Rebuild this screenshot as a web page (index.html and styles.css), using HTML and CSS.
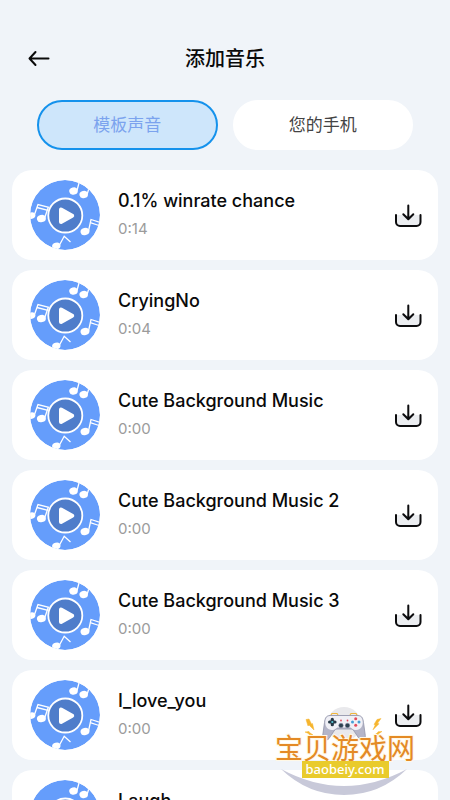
FILE: index.html
```html
<!DOCTYPE html>
<html lang="zh-CN">
<head>
<meta charset="utf-8">
<meta name="viewport" content="width=device-width, initial-scale=1">
<title>添加音乐</title>
<link rel="stylesheet" href="styles.css">
</head>
<body>
<svg class="sprite" aria-hidden="true">
  <defs>
    <clipPath id="disc-clip"><circle cx="35" cy="35" r="35"/></clipPath>
    <symbol id="disc" viewBox="0 0 70 70">
      <g clip-path="url(#disc-clip)">
        <circle cx="35" cy="35" r="35" fill="#659dfb"/>
        <g fill="#fff">
          <ellipse cx="43.5" cy="11" rx="4.3" ry="3.600" transform="rotate(-15 43.5 11)"/>
          <ellipse cx="53.7" cy="14.5" rx="4.3" ry="3.600" transform="rotate(-15 53.7 14.5)"/>
          <ellipse cx="1.2" cy="35.6" rx="4.2" ry="3.300" transform="rotate(-15 1.2 35.6)"/>
          <ellipse cx="11.4" cy="38.6" rx="4.5" ry="3.600" transform="rotate(-15 11.4 38.6)"/>
          <ellipse cx="55" cy="51.5" rx="4.5" ry="3.600" transform="rotate(-15 55 51.5)"/>
          <ellipse cx="26.3" cy="66" rx="4.2" ry="3.300" transform="rotate(-15 26.3 66)"/>
        </g>
        <g fill="none" stroke="#fff" stroke-width="1.300">
          <path d="M47 10.500 49.5 1M57.200 14 60 5"/>
          <path d="M4.5 34.500 8 24.600 19 27.400M7 27.500 18 30.400M14.800 37.500 18.200 27.500"/>
          <path d="M58.500 51 61 39.500 70 42.500M60.300 42.700 69 45.500"/>
          <path d="M29.500 65 34.200 56.300 40.500 62"/>
        </g>
      </g>
      <circle cx="35.300" cy="35.500" r="17" fill="#4f7dca" stroke="#fff" stroke-width="1.800"/>
      <path d="M31 29.500v12.500l11.200-6.200z" fill="#fff" stroke="#fff" stroke-width="4" stroke-linejoin="round"/>
    </symbol>
    <symbol id="download" viewBox="0 0 28 24">
      <path d="M2 11v7a4 4 0 0 0 4 4h16a4 4 0 0 0 4-4v-7z" fill="#eceef1"/>
      <g fill="none" stroke="#0c0c0e" stroke-width="2" stroke-linecap="round" stroke-linejoin="round">
        <path d="M2 11v7a4 4 0 0 0 4 4h16.500a4 4 0 0 0 4-4v-7"/>
        <path d="M14.300 1.500v13.500M9.300 10.300l5 5 5-5"/>
      </g>
    </symbol>
  </defs>
</svg>

<div class="app">
  <header class="topbar">
    <button class="back" type="button" aria-label="返回">
      <svg viewBox="0 0 22 18" width="22" height="18" fill="none" stroke="#0a0a0a" stroke-width="2" stroke-linecap="round" stroke-linejoin="round"><path d="M20.500 9.500H1.500M7.500 3 1.500 9.500l6 6.500"/></svg>
    </button>
    <h1 class="title">添加音乐</h1>
  </header>

  <nav class="tabs">
    <button class="tab tab-active" type="button">模板声音</button>
    <button class="tab" type="button">您的手机</button>
  </nav>

  <ul class="tracks">
    <li class="track">
      <button class="play" type="button" aria-label="播放"><svg><use href="#disc"/></svg></button>
      <div class="info"><h2 class="name">0.1% winrate chance</h2><p class="time">0:14</p></div>
      <button class="save" type="button" aria-label="下载"><svg><use href="#download"/></svg></button>
    </li>
    <li class="track">
      <button class="play" type="button" aria-label="播放"><svg><use href="#disc"/></svg></button>
      <div class="info"><h2 class="name">CryingNo</h2><p class="time">0:04</p></div>
      <button class="save" type="button" aria-label="下载"><svg><use href="#download"/></svg></button>
    </li>
    <li class="track">
      <button class="play" type="button" aria-label="播放"><svg><use href="#disc"/></svg></button>
      <div class="info"><h2 class="name">Cute Background Music</h2><p class="time">0:00</p></div>
      <button class="save" type="button" aria-label="下载"><svg><use href="#download"/></svg></button>
    </li>
    <li class="track">
      <button class="play" type="button" aria-label="播放"><svg><use href="#disc"/></svg></button>
      <div class="info"><h2 class="name">Cute Background Music 2</h2><p class="time">0:00</p></div>
      <button class="save" type="button" aria-label="下载"><svg><use href="#download"/></svg></button>
    </li>
    <li class="track">
      <button class="play" type="button" aria-label="播放"><svg><use href="#disc"/></svg></button>
      <div class="info"><h2 class="name">Cute Background Music 3</h2><p class="time">0:00</p></div>
      <button class="save" type="button" aria-label="下载"><svg><use href="#download"/></svg></button>
    </li>
    <li class="track">
      <button class="play" type="button" aria-label="播放"><svg><use href="#disc"/></svg></button>
      <div class="info"><h2 class="name">I_love_you</h2><p class="time">0:00</p></div>
      <button class="save" type="button" aria-label="下载"><svg><use href="#download"/></svg></button>
    </li>
    <li class="track">
      <button class="play" type="button" aria-label="播放"><svg><use href="#disc"/></svg></button>
      <div class="info"><h2 class="name">Laugh</h2></div>
    </li>
  </ul>

  <div class="brand">
    <svg class="brand-art" viewBox="0 0 140 92" aria-hidden="true">
      <circle cx="69" cy="19" r="17" fill="#e9e9ec"/>
      <path d="M6 64Q69 98 132 64Q105 90 69 90T6 64Z" fill="#c8c9d9"/>
      <path d="M56 10l1-1.500h5l1 1.500M75 10l1-1.500h5l1 1.500" fill="none" stroke="#f0b63c" stroke-width="1.200"/>
      <path d="M55 10.500h28c4 0 5 3 5.500 7l1.800 13c.5 4-4 6-6.300 3L79 26c-1-1.500-2-2-4-2H63c-2 0-3 .5-4 2l-5 7.500c-2.300 3-6.800 1-6.300-3l1.800-13c.5-4 1.500-7 5.500-7z" fill="#b4b5c8" stroke="#9294aa" stroke-width=".8"/>
      <path d="M55 11h28c3.500 0 4.500 3 4.700 6 .3 4-2 8-6.700 8-4 0-4-2.500-6-2.500H63c-2 0-2 2.500-6 2.500-4.700 0-7-4-6.700-8 .2-3 1.200-6 4.700-6z" fill="#f0f0f6"/>
      <path d="M57.300 14.300v5.400M54.600 17h5.400" stroke="#263947" stroke-width="3.200" stroke-linecap="round"/>
      <circle cx="57.300" cy="17" r="1.100" fill="#57c8d8"/>
      <g fill="#e44a5c"><circle cx="80.700" cy="13.800" r="1.500"/><circle cx="80.700" cy="20.200" r="1.500"/><circle cx="66" cy="15.500" r=".9"/><circle cx="72.500" cy="15.500" r=".9"/></g>
      <g fill="#459fd6"><circle cx="77.500" cy="17" r="1.500"/><circle cx="84" cy="17" r="1.500"/></g>
      <g fill="#2d4150" stroke="#8b8da2" stroke-width=".5"><circle cx="66" cy="20.500" r="2.300"/><circle cx="72.500" cy="20.500" r="2.300"/></g>
      <path d="M31 14.500l3-.5 2.500 5 1-.5 1.500 6.500-5-5-1 1zM30 27l4-.5.5 1 3.500 2.500-4-.5-.5-1zM106 13.500l-4 1-3 5 1.300.3-2.300 5 6-6-1.500-.5zM107 26.500l-4 .3-.5 1-3.500 2.500 4-.5.5-1z" fill="#f6b52e" stroke="#f6b52e" stroke-width=".5"/>
    </svg>
    <span class="brand-name">宝贝游戏网</span>
    <span class="brand-site">baobeiy.com</span>
  </div>
</div>
</body>
</html>
```
FILE: styles.css
```css
* {
  box-sizing: border-box;
}

body {
  margin: 0;
  background: #f0f4f9;
  color: #0a0a0a;
  font-family: Inter, "Noto Sans CJK SC", sans-serif;
}

button {
  padding: 0;
  border: 0;
  background: none;
  color: inherit;
  font: inherit;
  cursor: pointer;
}

h1,
h2,
p,
ul {
  margin: 0;
  padding: 0;
}

.sprite {
  position: absolute;
  width: 0;
  height: 0;
}

.app {
  position: relative;
  height: 100vh;
  overflow: hidden;
}

.topbar {
  display: grid;
  grid-template-columns: 22px 1fr 22px;
  align-items: center;
  padding: 40px 28px 0;
}

.back svg {
  display: block;
}

.title {
  font-family: "Noto Sans CJK SC", sans-serif;
  font-size: 20px;
  font-weight: 500;
  line-height: 36px;
  text-align: center;
}

.tabs {
  display: flex;
  gap: 15px;
  padding: 24px 37px 20px;
}

.tab {
  flex: 1;
  height: 50px;
  padding-bottom: 2px;
  border: 2px solid #fff;
  border-radius: 25px;
  background: #fff;
  color: #444;
  font-family: "Noto Sans CJK SC", sans-serif;
  font-size: 17px;
  line-height: 24px;
}

.tab-active {
  border-color: #1592ec;
  background: #cee6fb;
  color: #7ba3ee;
}

.tracks {
  display: flex;
  flex-direction: column;
  gap: 10px;
  padding: 0 12px;
  list-style: none;
}

.track {
  display: flex;
  align-items: center;
  height: 90px;
  padding: 0 16px 0 18px;
  border-radius: 20px;
  background: #fff;
}

.play svg {
  display: block;
  width: 70px;
  height: 70px;
}

.info {
  flex: 1;
  align-self: flex-start;
  padding: 18px 0 0 18px;
}

.name {
  font-size: 18px;
  font-weight: 500;
  line-height: 26px;
}

.time {
  color: #9b9b9b;
  font-size: 15px;
  line-height: 30px;
}

.save {
  padding-top: 2px;
}

.save svg {
  display: block;
  width: 28px;
  height: 24px;
}

.brand {
  position: absolute;
  right: 35px;
  bottom: 3px;
  display: flex;
  flex-direction: column;
  align-items: center;
  width: 140px;
  height: 92px;
  padding-top: 28px;
}

.brand-art {
  position: absolute;
  inset: 0;
}

.brand-name {
  position: relative;
  color: #e48a25;
  font-family: "Noto Sans CJK SC", sans-serif;
  font-size: 28px;
  line-height: 28px;
  white-space: nowrap;
  -webkit-text-stroke: 2px #fff8e6;
  paint-order: stroke fill;
}

.brand-site {
  position: relative;
  padding: 0 4px;
  background: #e9cb2c;
  color: #fff;
  font-family: "Noto Sans", sans-serif;
  font-size: 13px;
  font-weight: 500;
  line-height: 17px;
}
```
